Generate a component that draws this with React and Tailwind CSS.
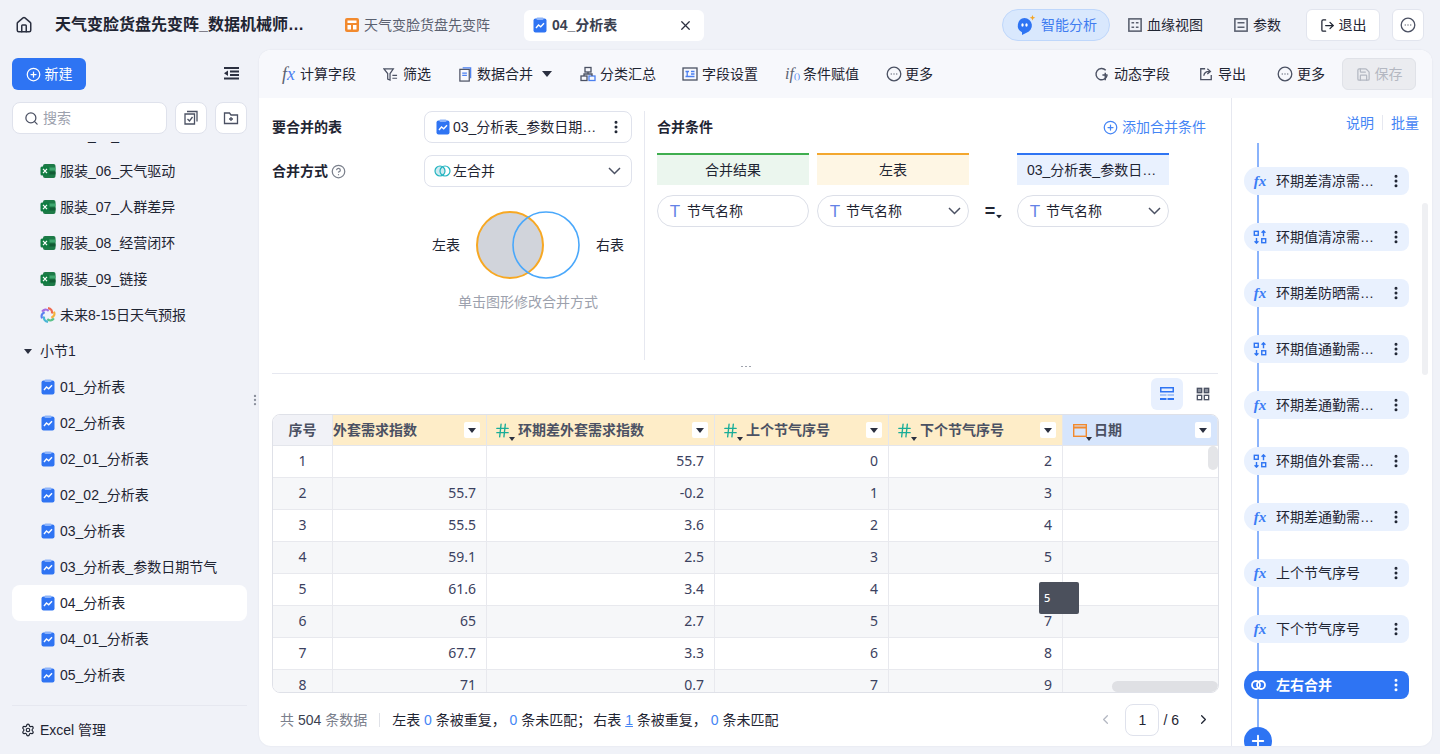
import React from "react";
import {
  ChevronLeft,
  ChevronRight,
  CirclePlus,
  EllipsisVertical,
  HelpCircle,
  House,
  LogOut,
  Plus,
  Search,
  Settings,
  Hash,
  X,
  Save,
} from "lucide-react";

const Caret = ({ className = "", w = 8, h = 5 }) => (
  <svg width={w} height={h} viewBox="0 0 8 5" preserveAspectRatio="none" className={`shrink-0 ${className}`}>
    <path d="M0 0h8L4 5z" fill="currentColor" />
  </svg>
);

const Chevron = ({ className = "" }) => (
  <svg width="13" height="8" viewBox="0 0 13 8" fill="none" stroke="#4b5163" strokeWidth="1.500" className={`shrink-0 ${className}`}>
    <path d="M1 1l5.500 5.500L12 1" />
  </svg>
);

const ChartDoc = ({ size = 16 }) => (
  <svg width={size} height={size} viewBox="0 0 16 16" className="shrink-0">
    <rect x="1.500" y="1.500" width="13" height="14" rx="2" fill="#2f74f3" />
    <rect x="4.500" y="0.500" width="7" height="2.500" rx="1" fill="#8db4fa" />
    <path d="M4 11l2.500-3 2.200 1.800L12 6.200" stroke="#fff" strokeWidth="1.400" fill="none" />
  </svg>
);

const ExcelIcon = () => (
  <svg width="16" height="16" viewBox="0 0 16 16" className="shrink-0">
    <rect x="3" y="1" width="12.500" height="14" rx="2" fill="#1d7a47" />
    <rect x="9" y="4.500" width="6.500" height="3" fill="#3fa66f" />
    <rect x="9" y="8.500" width="6.500" height="3" fill="#115c34" />
    <rect x="0.500" y="3.500" width="9" height="9" rx="1.500" fill="#107c41" />
    <path d="M3 5.800l4 4.400M7 5.800l-4 4.400" stroke="#fff" strokeWidth="1.200" />
  </svg>
);

const petals = [
  [0, "#ef6a4e"],
  [60, "#f5b13d"],
  [120, "#5cc28a"],
  [180, "#49b6d6"],
  [240, "#5b7ff0"],
  [300, "#a56fe0"],
];

const SpectrumIcon = () => (
  <svg width="16" height="16" viewBox="0 0 16 16" fill="none" strokeWidth="2.200" className="shrink-0">
    {petals.map(([deg, color]) => (
      <path key={deg} d="M8 1.200C11 1.500 12.500 3.500 12 6.500" stroke={color} transform={`rotate(${deg} 8 8)`} />
    ))}
  </svg>
);

const OutlineIcon = ({ children, size = 16, color = "#4b5163", weight = "1.300" }) => (
  <svg width={size} height={size} viewBox="0 0 16 16" fill="none" stroke={color} strokeWidth={weight} className="shrink-0">
    {children}
  </svg>
);

const TextType = () => (
  <span className="w-[14px] shrink-0 text-center text-[17px] leading-none text-[#6482e6]">T</span>
);

const FieldType = ({ calendar }) =>
  calendar ? (
    <span className="relative mr-[4px] flex w-[17px] shrink-0">
      <svg width="14" height="15" viewBox="0 0 14 15" fill="none" stroke="#f28a2e" strokeWidth="1.400" className="shrink-0">
        <rect x="0.700" y="1.700" width="12.600" height="11.600" />
        <path d="M0.700 4.500h12.600" strokeWidth="2" />
      </svg>
      <Caret className="absolute left-[13px] top-[14px] text-[#2b3040]" w={6} h={4} />
    </span>
  ) : (
    <span className="relative -ml-[3px] mr-[7px] flex w-[17px] shrink-0">
      <Hash size={17} strokeWidth={1.900} className="text-[#19ad98]" />
      <Caret className="absolute left-[15px] top-[15px] text-[#2b3040]" w={6} h={4} />
    </span>
  );

const sideItems = [
  { name: "服装_06_天气驱动", icon: <ExcelIcon /> },
  { name: "服装_07_人群差异", icon: <ExcelIcon /> },
  { name: "服装_08_经营闭环", icon: <ExcelIcon /> },
  { name: "服装_09_链接", icon: <ExcelIcon /> },
  { name: "未来8-15日天气预报", icon: <SpectrumIcon /> },
];

const sectionItems = ["01_分析表", "02_分析表", "02_01_分析表", "02_02_分析表", "03_分析表", "03_分析表_参数日期节气", "04_分析表", "04_01_分析表", "05_分析表"];

const SideRow = ({ icon, name, active }) => (
  <div className={`flex h-[36px] shrink-0 items-center gap-[4px] rounded-lg pl-[28px] ${active ? "bg-white" : ""}`}>
    {icon}
    <span className="whitespace-nowrap">{name}</span>
  </div>
);

const Sidebar = () => (
  <aside className="flex w-[259px] shrink-0 flex-col">
    <div className="flex h-[52px] items-start justify-between pl-[12px] pr-[20px] pt-[8px]">
      <button className="flex h-[32px] w-[74px] items-center justify-center gap-[4px] rounded-md bg-[#2e74f3] text-white">
        <CirclePlus size={15} />
        新建
      </button>
      <svg width="15" height="13" viewBox="0 0 15 13" className="mt-[9px]" fill="#2b3040">
        <rect width="15" height="2" />
        <rect x="6" y="3.500" width="9" height="2" />
        <rect x="6" y="7" width="9" height="2" />
        <rect y="10.500" width="15" height="2" />
        <path d="M4 3.500v5.500L0 6.250z" />
      </svg>
    </div>
    <div className="flex gap-[8px] px-[12px]">
      <div className="flex h-[32px] w-[155px] items-center gap-[4px] rounded-lg border border-[#dfe2ec] bg-white pl-[11px] text-[#9ca1ad]">
        <Search size={15} className="text-[#4b5163]" />
        搜索
      </div>
      <div className="flex h-[32px] w-[32px] items-center justify-center rounded-lg border border-[#dfe2ec] bg-white">
        <OutlineIcon>
          <path d="M4 1.500h10v10M2 4h9.500v10H2z" />
          <path d="M4.500 9l2 2 3-4" />
        </OutlineIcon>
      </div>
      <div className="flex h-[32px] w-[32px] items-center justify-center rounded-lg border border-[#dfe2ec] bg-white">
        <OutlineIcon>
          <path d="M1.500 3h5l1.500 2h6.500v8.500h-13z" />
          <path d="M8 7v4M6 9h4" />
        </OutlineIcon>
      </div>
    </div>
    <div className="mt-[8px] h-[553px] overflow-hidden px-[12px]">
      <div className="-mt-[25px] flex flex-col">
        <SideRow icon={<ExcelIcon />} name="服装_05_渠道结构" />
        {sideItems.map((item) => (
          <SideRow key={item.name} icon={item.icon} name={item.name} />
        ))}
        <div className="flex h-[36px] shrink-0 items-center gap-[8px] pl-[12px]">
          <Caret className="text-[#2b3040]" />
          <span>小节1</span>
        </div>
        {sectionItems.map((name) => (
          <SideRow key={name} icon={<ChartDoc />} name={name} active={name === "04_分析表"} />
        ))}
      </div>
    </div>
    <div className="mx-[12px] mt-[10px] flex items-center gap-[5px] border-t border-[#e6e8f0] pl-[9px] pt-[14px]">
      <Settings size={14} />
      <span>Excel 管理</span>
    </div>
  </aside>
);

const MoreCircle = ({ color = "#4b5163" }) => (
  <OutlineIcon color={color}>
    <circle cx="8" cy="8" r="6.800" />
    <path d="M4.800 8h.8M7.600 8h.8M10.400 8h.8" strokeWidth="1.500" />
  </OutlineIcon>
);

const Header = () => (
  <header className="flex h-[50px] shrink-0 items-center">
    <House size={18} className="ml-[15px] mr-[22px] shrink-0 text-[#2b3040]" />
    <div className="w-[252px] shrink-0 truncate text-[16px] font-semibold text-[#1f2533]">天气变脸货盘先变阵_数据机械师的分析看板</div>
    <div className="ml-[38px] flex w-[179px] shrink-0 items-center gap-[5px] text-[#5b6170]">
      <svg width="14" height="14" viewBox="0 0 14 14" className="shrink-0">
        <rect width="14" height="14" rx="2" fill="#f28a2e" />
        <path d="M2.500 2.500h9v2.500h-9zM2.500 7h3.500v4.500h-3.500zM8 7h3.500v4.500h-3.500z" fill="#fff" />
      </svg>
      天气变脸货盘先变阵
    </div>
    <div className="flex h-[31px] w-[180px] shrink-0 items-center gap-[4px] rounded-md bg-white pl-[8px] font-semibold text-[#3b4150]">
      <ChartDoc />
      <span>04_分析表</span>
      <X size={15} className="ml-auto mr-[11px] text-[#2b3040]" />
    </div>
    <div className="ml-[298px] flex h-[32px] w-[108px] shrink-0 items-center gap-[5px] rounded-full border border-[#bfd7fb] bg-[#d9e8fd] pl-[13px] text-[#3f7cf0]">
      <svg width="20" height="20" viewBox="0 0 20 20" className="shrink-0">
        <path d="M8.500 3a7.500 7.500 0 0 1 2 14.700L6 20v-2.800A7.500 7.500 0 0 1 8.500 3z" fill="#2e74f3" />
        <ellipse cx="6.500" cy="10" rx="1.200" ry="1.700" fill="#fff" />
        <ellipse cx="10.500" cy="10" rx="1.200" ry="1.700" fill="#fff" />
        <path d="M16.500 0l.8 2 2 .8-2 .8-.8 2-.8-2-2-.8 2-.8z" fill="#f5a524" />
      </svg>
      智能分析
    </div>
    <div className="ml-[18px] flex shrink-0 items-center gap-[5px]">
      <OutlineIcon size={14} color="#5b6170" weight="1.800">
        <rect x="1" y="1" width="14" height="14" />
        <path d="M4 5.500h3M9 5.500h3M4 10.500h3M9 10.500h3" />
      </OutlineIcon>
      血缘视图
    </div>
    <div className="ml-[31px] flex shrink-0 items-center gap-[5px]">
      <OutlineIcon size={14} color="#5b6170" weight="1.800">
        <rect x="1" y="1" width="14" height="14" />
        <path d="M4 5.500h8M4 10.500h8" />
      </OutlineIcon>
      参数
    </div>
    <button className="ml-[25px] flex h-[32px] w-[74px] shrink-0 items-center justify-center gap-[4px] rounded-md border border-[#e2e5ee] bg-white">
      <LogOut size={15} />
      退出
    </button>
    <button className="ml-[12px] flex h-[32px] w-[32px] shrink-0 items-center justify-center rounded-md border border-[#e2e5ee] bg-white">
      <MoreCircle />
    </button>
  </header>
);

const Tool = ({ icon, label, children, gap = "gap-[4px]", className = "" }) => (
  <div className={`flex shrink-0 items-center whitespace-nowrap ${gap} ${className}`}>
    {icon}
    {label}
    {children}
  </div>
);

const Toolbar = () => (
  <div className="flex h-[48px] shrink-0 items-center rounded-t-xl bg-[#f7f8fc] pl-[23px] pr-[16px]">
    <div className="flex items-center gap-[27px]">
      <Tool
        gap="gap-[2px]"
        label="计算字段"
        icon={
          <span className="w-[16px] font-['Liberation_Serif'] text-[18px] italic leading-none text-[#5b6170]">
            f<span className="text-[#4b7ff0]">x</span>
          </span>
        }
      />
      <Tool
        label="筛选"
        gap="gap-[5px]"
        icon={
          <OutlineIcon size={15}>
            <path d="M1 2h10L7.500 7v7L5 13V7zM10 9h5M10 12h5" />
          </OutlineIcon>
        }
      />
      <Tool
        label="数据合并"
        icon={
          <OutlineIcon size={15}>
            <rect x="2" y="2.500" width="10" height="12.500" />
            <path d="M5 1h8.500v11M4.500 6.500h5M4.500 9h5" stroke="#4b7ff0" />
          </OutlineIcon>
        }
      >
        <Caret className="ml-[5px] mr-[1px] text-[#2b3040]" w={10} h={6} />
      </Tool>
      <Tool
        label="分类汇总"
        className="-mr-[1px]"
        icon={
          <OutlineIcon>
            <rect x="5" y="1.500" width="6" height="4.500" />
            <rect x="1" y="10" width="6" height="4.500" />
            <rect x="9" y="10" width="6" height="4.500" stroke="#4b7ff0" />
            <path d="M8 6v2M4 10V8h8v2" />
          </OutlineIcon>
        }
      />
      <Tool
        label="字段设置"
        icon={
          <OutlineIcon>
            <rect x="1" y="2" width="14" height="12" />
            <path d="M3.500 5.500h3.500M5.200 5.500v5M9 5.500h3.500M9 8h3.500M3.500 10.500h9" stroke="#4b7ff0" />
          </OutlineIcon>
        }
      />
      <Tool
        label="条件赋值"
        icon={
          <span className="w-[14px] font-['Liberation_Serif'] text-[16px] italic leading-none text-[#5b6170]">
            if<span className="text-[9px] not-italic text-[#4b7ff0]">()</span>
          </span>
        }
      />
      <Tool label="更多" gap="gap-[3px]" icon={<MoreCircle color="#4b5163" />} />
    </div>
    <div className="ml-auto flex items-center">
      <Tool
        label="动态字段"
        gap="gap-[5px]"
        icon={
          <OutlineIcon size={15} weight="1.500">
            <path d="M12.500 3.500A6 6 0 1 0 14 9" />
            <path d="M9 8.500h5.500M12 6v8" />
          </OutlineIcon>
        }
      />
      <Tool
        label="导出"
        gap="gap-[5px]"
        className="ml-[29px]"
        icon={
          <OutlineIcon size={14} weight="1.500">
            <path d="M7 2H2v12.500h12V9" />
            <path d="M5.500 10c.3-3 2.500-5 6.500-5M9.500 2l3.500 3-3.500 3" />
          </OutlineIcon>
        }
      />
      <Tool label="更多" className="ml-[31px]" icon={<MoreCircle />} />
      <button className="ml-[17px] flex h-[32px] w-[74px] items-center justify-center gap-[4px] rounded-md border border-[#e0e2e8] bg-[#ebecf0] text-[#b4b8c2]">
        <Save size={15} />
        保存
      </button>
    </div>
  </div>
);

const JoinLeft = () => (
  <svg viewBox="0 0 104 68" className="h-[68px] w-[104px] shrink-0">
    <circle cx="34" cy="34" r="33" fill="#d1d4db" stroke="#f7a823" strokeWidth="2" />
    <circle cx="70" cy="34" r="33" fill="none" stroke="#4aa8fb" strokeWidth="1.600" />
  </svg>
);

const MergeSettings = () => (
  <div className="w-[360px] shrink-0">
    <div className="flex items-center">
      <span className="w-[152px] font-semibold">要合并的表</span>
      <div className="flex h-[32px] w-[208px] items-center gap-[2px] rounded-lg border border-[#dfe2ec] pl-[10px] pr-[7px]">
        <ChartDoc />
        <span className="truncate">03_分析表_参数日期节气</span>
        <EllipsisVertical size={16} strokeWidth={2.500} className="ml-auto shrink-0" />
      </div>
    </div>
    <div className="mt-[12px] flex items-center">
      <span className="flex w-[152px] items-center gap-[3px] font-semibold">
        合并方式
        <HelpCircle size={15} className="font-normal text-[#7b808c]" />
      </span>
      <div className="flex h-[32px] w-[208px] items-center gap-[2px] rounded-lg border border-[#dfe2ec] pl-[9px] pr-[10px]">
        <svg width="17" height="12" viewBox="0 0 17 12" className="shrink-0" fill="none" stroke="#22b4c0" strokeWidth="1.200">
          <circle cx="6" cy="6" r="5" fill="#cfeaf0" />
          <circle cx="11" cy="6" r="5" />
        </svg>
        左合并
        <Chevron className="ml-auto" />
      </div>
    </div>
    <div className="mt-[24px] flex items-center pl-[160px]">
      <span className="w-[44px] shrink-0">左表</span>
      <JoinLeft />
      <span className="ml-[16px] shrink-0">右表</span>
    </div>
    <div className="mt-[13px] pl-[186px] text-[#9ca1ad]">单击图形修改合并方式</div>
  </div>
);

const ColHead = ({ label, bar, bg }) => (
  <div className={`flex h-[32px] w-[152px] items-center justify-center truncate border-t-2 px-[10px] ${bar} ${bg}`}>
    <span className="truncate">{label}</span>
  </div>
);

const Pill = ({ select }) => (
  <div className={`flex h-[32px] w-[152px] items-center rounded-full border border-[#dcdfe8] pl-[10px] pr-[7px] ${select ? "gap-[4px]" : "gap-[5px]"}`}>
    <TextType />
    节气名称
    {select && <Chevron className="ml-auto" />}
  </div>
);

const MergeCondition = () => (
  <div className="ml-[12px] h-[249px] flex-1 border-l border-[#e6e8f0] pl-[12px] pr-[12px]">
    <div className="flex h-[32px] items-center justify-between">
      <span className="font-semibold">合并条件</span>
      <span className="flex items-center gap-[4px] text-[#4585f5]">
        <CirclePlus size={15} />
        添加合并条件
      </span>
    </div>
    <div className="mt-[10px] flex">
      <ColHead label="合并结果" bar="border-[#3fae4f]" bg="bg-[#ebf6ee]" />
      <div className="w-[8px]" />
      <ColHead label="左表" bar="border-[#f3a72e]" bg="bg-[#fef6e4]" />
      <div className="w-[48px]" />
      <ColHead label="03_分析表_参数日期节气" bar="border-[#2e74f3]" bg="bg-[#e9f1fe]" />
    </div>
    <div className="mt-[10px] flex items-center">
      <Pill />
      <div className="w-[8px]" />
      <Pill select />
      <div className="flex w-[48px] items-center justify-center pl-[2px] text-[18px] font-semibold">
        =<Caret className="mt-[10px] scale-75" />
      </div>
      <Pill select />
    </div>
  </div>
);

const cols = "grid-cols-[60px_154px_228px_174px_174px_155px]";

const HeadCell = ({ label, type, bg = "bg-[#feedc8]", calendar, first }) => (
  <div className={`flex h-[31px] items-center border-r border-b border-[#e4e6ec] ${bg} ${first ? "" : "pl-[10px]"} pr-[6px] font-semibold text-[#4b5163]`}>
    {type && <FieldType calendar={calendar} />}
    <span className="truncate pb-[1px]">{label}</span>
    <span className="ml-auto flex h-[16px] w-[16px] shrink-0 items-center justify-center rounded-[2px] bg-white">
      <Caret className="text-[#2b3040]" />
    </span>
  </div>
);

const rows = [
  ["1", "", "55.7", "0", "2"],
  ["2", "55.7", "-0.2", "1", "3"],
  ["3", "55.5", "3.6", "2", "4"],
  ["4", "59.1", "2.5", "3", "5"],
  ["5", "61.6", "3.4", "4", "6"],
  ["6", "65", "2.7", "5", "7"],
  ["7", "67.7", "3.3", "6", "8"],
  ["8", "71", "0.7", "7", "9"],
];

const DataTable = () => (
  <div className="relative h-[279px] w-[947px] overflow-hidden rounded-lg border border-[#dfe1e8] text-[#3b4160] [font-family:'Noto_Sans','Noto_Sans_CJK_SC',sans-serif]">
    <div className={`grid ${cols}`}>
      <div className="flex h-[31px] items-center justify-center border-r border-b border-[#e4e6ec] bg-[#f1f2f7] pb-[1px] font-semibold text-[#4b5163]">序号</div>
      <HeadCell label="外套需求指数" first />
      <HeadCell label="环期差外套需求指数" type />
      <HeadCell label="上个节气序号" type />
      <HeadCell label="下个节气序号" type />
      <HeadCell label="日期" type calendar bg="bg-[#d6e5fc]" />
    </div>
    {rows.map((row, i) => (
      <div key={row[0]} className={`grid ${cols} ${i % 2 ? "bg-[#f6f7f9]" : "bg-white"}`}>
        <div className="flex h-[32px] items-center justify-center border-r border-b border-[#e8e9ee] pb-[2px]">{row[0]}</div>
        {row.slice(1).map((v, j) => (
          <div key={j} className="flex h-[32px] items-center justify-end border-r border-b border-[#e8e9ee] pb-[2px] pr-[10px]">
            {v}
          </div>
        ))}
        <div className="h-[32px] border-b border-[#e8e9ee]" />
      </div>
    ))}
    <div className="absolute right-0 top-[31px] h-[24px] w-[10px] rounded-md bg-[#e4e5e8]" />
    <div className="absolute bottom-0 right-0 h-[11px] w-[106px] rounded-md bg-[#dfe0e4]" />
    <div className="absolute left-[766px] top-[167px] flex h-[32px] w-[40px] items-center rounded-[2px] bg-[#4b505c] pl-[5px] text-[11px] font-medium text-white">5</div>
  </div>
);

const Footer = () => (
  <div className="flex flex-1 items-center">
    <span className="text-[#7b808c]">
      共 <span className="text-[#3b4150]">504</span> 条数据
    </span>
    <span className="mx-[12px] h-[14px] border-l border-[#e0e2e8]" />
    <span className="whitespace-nowrap">
      左表 <span className="text-[#4585f5]">0</span> 条被重复， <span className="text-[#4585f5]">0</span> 条未匹配；<span className="ml-[2px]">右表</span>{" "}
      <span className="text-[#4585f5] underline">1</span> 条被重复， <span className="text-[#4585f5]">0</span> 条未匹配
    </span>
    <div className="ml-auto flex items-center pr-[7px]">
      <ChevronLeft size={15} className="text-[#b4b8c2]" />
      <span className="ml-[12px] flex h-[32px] w-[34px] items-center justify-center rounded-lg border border-[#dfe2ec]">1</span>
      <span className="ml-[4px]">/ 6</span>
      <ChevronRight size={15} className="ml-[17px]" />
    </div>
  </div>
);

const pipeline = [
  ["fx", "环期差清凉需求指数"],
  ["swap", "环期值清凉需求指数"],
  ["fx", "环期差防晒需求指数"],
  ["swap", "环期值通勤需求指数"],
  ["fx", "环期差通勤需求指数"],
  ["swap", "环期值外套需求指数"],
  ["fx", "环期差通勤需求指数"],
  ["fx", "上个节气序号"],
  ["fx", "下个节气序号"],
];

const SwapIcon = () => (
  <OutlineIcon size={14} color="#2e74f3" weight="1.600">
    <rect x="1.500" y="1.500" width="4.500" height="4.500" />
    <rect x="10" y="10" width="4.500" height="4.500" />
    <path d="M12 7V1M9.800 3.200L12 1l2.200 2.200M4 9v6M1.800 12.800L4 15l2.200-2.200" />
  </OutlineIcon>
);

const StepConnector = ({ h = "h-[28px]" }) => <div className={`ml-[13px] w-[2px] shrink-0 bg-[#8ab3fb] ${h}`} />;

const Step = ({ kind, name }) => (
  <div className="flex h-[28px] w-[165px] shrink-0 items-center rounded-l-[14px] rounded-r-lg bg-[#e9f1fe] pl-[7px] pr-[5px]">
    <span className="flex w-[18px] justify-center">
      {kind === "fx" ? <span className="font-['Liberation_Serif'] text-[15px] font-bold italic leading-none text-[#3b7df5]">fx</span> : <SwapIcon />}
    </span>
    <span className="ml-[7px] w-[100px] truncate">{name}</span>
    <EllipsisVertical size={16} strokeWidth={2.500} className="ml-auto shrink-0" />
  </div>
);

const RightPanel = () => (
  <div className="relative flex w-[200px] shrink-0 flex-col overflow-hidden rounded-br-xl border-l border-[#e6e8f0] pl-[12px]">
    <div className="flex h-[45px] shrink-0 items-end justify-end pb-[10px] pr-[12px] text-[#4585f5]">
      说明
      <span className="mx-[8px] mb-[3px] h-[15px] border-l border-[#e6e8f0]" />
      批量
    </div>
    <StepConnector h="h-[24px]" />
    {pipeline.map(([kind, name], i) => (
      <React.Fragment key={i}>
        <Step kind={kind} name={name} />
        <StepConnector />
      </React.Fragment>
    ))}
    <div className="flex h-[28px] w-[165px] shrink-0 items-center rounded-l-[14px] rounded-r-lg bg-[#2e74f3] pl-[7px] pr-[5px] font-semibold text-white">
      <svg width="15" height="10" viewBox="0 0 15 10" fill="none" stroke="#fff" strokeWidth="1.800" className="shrink-0">
        <circle cx="5" cy="5" r="4" />
        <circle cx="10" cy="5" r="4" />
      </svg>
      <span className="ml-[10px]">左右合并</span>
      <EllipsisVertical size={16} strokeWidth={2.500} className="ml-auto shrink-0" />
    </div>
    <StepConnector />
    <div className="flex h-[28px] w-[28px] shrink-0 items-center justify-center rounded-full bg-[#2e74f3] text-white">
      <Plus size={18} strokeWidth={2.500} />
    </div>
    <div className="absolute right-[3px] top-[105px] h-[172px] w-[6px] rounded-full bg-[#eff0f3]" />
  </div>
);

export default function App() {
  return (
    <div className="flex h-[754px] w-[1440px] flex-col overflow-hidden bg-[#f0f2f8] text-[14px] leading-[20px] text-[#1f2533] [font-family:'Liberation_Sans','Noto_Sans_CJK_SC',sans-serif]">
      <Header />
      <div className="relative flex min-h-0 flex-1">
        <Sidebar />
        <span className="absolute left-[248px] top-[343px] text-[#8b909c]">
          <EllipsisVertical size={14} />
        </span>
        <main className="mb-[8px] flex w-[1173px] flex-col rounded-xl bg-white shadow-[0_0_2px_rgba(30,40,80,0.08)]">
          <Toolbar />
          <div className="flex min-h-0 flex-1">
            <div className="flex w-[972px] shrink-0 flex-col">
              <div className="relative mx-[13px] flex h-[276px] shrink-0 border-b border-[#e6e8f0] pt-[13px]">
                <MergeSettings />
                <MergeCondition />
                <div className="absolute bottom-[6px] left-[469px] flex gap-[2px]">
                  <span className="h-[1px] w-[2px] bg-[#a0a4ae]" />
                  <span className="h-[1px] w-[2px] bg-[#a0a4ae]" />
                  <span className="h-[1px] w-[2px] bg-[#a0a4ae]" />
                </div>
              </div>
              <div className="flex h-[40px] shrink-0 items-end justify-end gap-[4px] pb-[4px] pr-[12px]">
                <span className="flex h-[32px] w-[32px] items-center justify-center rounded-md bg-[#e8f0fe]">
                  <svg width="14" height="14" viewBox="0 0 14 14" className="shrink-0">
                    <rect x="0.750" y="0.750" width="12.500" height="4" fill="none" stroke="#2e74f3" strokeWidth="1.500" />
                    <path d="M0 7h6.500v2H0zM7.500 7H14v2H7.500z" fill="#a8c6fa" />
                    <path d="M0 11h6.500v2H0zM7.500 11H14v2H7.500z" fill="#2e74f3" />
                  </svg>
                </span>
                <span className="flex h-[32px] w-[32px] items-center justify-center">
                  <OutlineIcon size={14} weight="1.500">
                    <rect x="1.500" y="1.500" width="5" height="5" fill="#8b909c" />
                    <rect x="9.500" y="1.500" width="5" height="5" fill="#8b909c" />
                    <rect x="1.500" y="9.500" width="5" height="5" />
                    <rect x="9.500" y="9.500" width="5" height="5" />
                  </OutlineIcon>
                </span>
              </div>
              <div className="pl-[13px]">
                <DataTable />
              </div>
              <div className="flex flex-1 pl-[21px] pr-[13px]">
                <Footer />
              </div>
            </div>
            <RightPanel />
          </div>
        </main>
      </div>
    </div>
  );
}
